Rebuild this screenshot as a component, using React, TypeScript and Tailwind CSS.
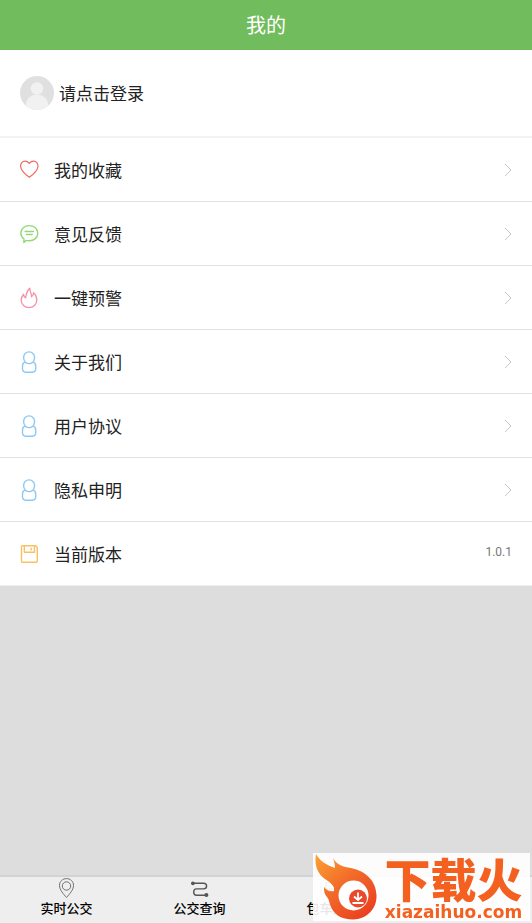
import type { ReactNode } from "react";

const HeartIcon = () => (
  <svg viewBox="0 0 20 22" className="h-[22px] w-5" fill="none" stroke="#ee6a62" strokeWidth="1.2" strokeLinejoin="round">
    <path d="M9.300 18.200C7 16.600 0.900 12 0.600 7.200C0.500 4.200 2.500 2.200 4.900 2.200C6.900 2.200 8.300 3.100 9.300 4.300C10.300 3.100 11.700 2.200 13.700 2.200C16.100 2.200 18.100 4.200 18 7.200C17.700 12 11.600 16.600 9.300 18.200Z" />
  </svg>
);

const ChatIcon = () => (
  <svg viewBox="0 0 20 22" className="h-[22px] w-5" fill="none" stroke="#93d978" strokeWidth="1.4" strokeLinecap="round" strokeLinejoin="round">
    <path d="M4 16C1.900 14.500 0.800 12.600 0.800 10.200C0.800 5.900 4.500 2.600 9.300 2.600C14.100 2.600 17.800 5.900 17.800 10.200C17.800 14.500 14.100 17.800 9.300 17.800C8.200 17.800 7.200 17.700 6.300 17.400L3.800 19.400Z" />
    <path d="M5.200 8.500H13.400M6.400 11.500H12.200" />
  </svg>
);

const FlameIcon = () => (
  <svg viewBox="0 0 20 22" className="h-[22px] w-5" fill="none" stroke="#f78fa9" strokeWidth="1.300" strokeLinejoin="round">
    <path d="M3.600 7.200C3.600 9 4.200 10 5.500 10.800C6.600 7.600 6 4 9.800 1.200C9.600 4.600 11.600 6 11.600 9.800C13.200 8.800 13.600 7.200 13.500 5.600C15.600 7.600 16.800 10 16.800 12.800C16.800 17.400 13.300 20.600 9 20.600C4.700 20.600 1.200 17.600 1.200 13.200C1.200 10.800 2 8.800 3.600 7.200Z" />
  </svg>
);

const PersonIcon = () => (
  <svg viewBox="0 0 20 22" className="h-[22px] w-5" fill="none" stroke="#8ec9f5" strokeWidth="1.400" strokeLinejoin="round">
    <path d="M5.400 11.200C4.200 10 3.600 8.400 3.600 6.600C3.600 3.400 6 0.900 9.100 0.900C12.200 0.900 14.600 3.400 14.600 6.600C14.600 8.400 14 10 12.800 11.200C11.800 12.100 10.600 12.600 9.100 12.600C7.600 12.600 6.400 12.100 5.400 11.200Z" />
    <path d="M5.200 11.200C3.400 11.700 2.500 13 2.500 15V17.800C2.500 20 3.600 21.200 5.800 21.200H12.400C14.600 21.200 15.700 20 15.700 17.800V15C15.700 13 14.800 11.700 13 11.200" />
  </svg>
);

const DiskIcon = () => (
  <svg viewBox="0 0 20 22" className="h-[22px] w-5" fill="none" stroke="#fbc063" strokeWidth="1.400" strokeLinejoin="round">
    <path d="M2.400 2.800H15.600L17.300 4.400V18Q17.300 19.200 16.100 19.200H2.700Q1.500 19.200 1.500 18V3.700Q1.500 2.800 2.400 2.800Z" />
    <path d="M4.300 3V9.200H14.500V3M11.200 4.800V7.600" />
  </svg>
);

const Chevron = () => (
  <svg viewBox="0 0 8 14" className="h-3.5 w-2" fill="none" stroke="#c6c6c6" strokeWidth="1">
    <path d="M1 1L7 7L1 13" />
  </svg>
);

const PinIcon = () => (
  <svg viewBox="0 0 20 20" className="size-5" fill="none" stroke="#707070" strokeWidth="1">
    <path d="M9.500 19.500C6.500 16 2.500 12 2.500 7.400C2.500 3.400 5.600 0.600 9.500 0.600C13.400 0.600 16.500 3.400 16.500 7.400C16.500 12 12.500 16 9.500 19.500Z" />
    <circle cx="9.500" cy="8" r="4.200" />
  </svg>
);

const RouteIcon = () => (
  <svg viewBox="0 0 20 20" className="size-5" fill="none" stroke="#555" strokeWidth="1.400">
    <path d="M4 5.300H13.500Q16.600 5.300 16.600 8.100Q16.600 10.900 13.500 10.900H6.500Q3.700 10.900 3.700 14Q3.700 17.200 6.500 17.200H16" />
    <circle cx="2.900" cy="5.300" r="1.900" fill="#555" stroke="none" />
    <circle cx="16.400" cy="17" r="2" fill="#555" stroke="none" />
  </svg>
);

const BusIcon = () => (
  <svg viewBox="0 0 20 20" className="size-5" fill="none" stroke="#555" strokeWidth="1.200">
    <rect x="3" y="4" width="14" height="12" rx="2" />
    <path d="M3 11H17M6 16V18M14 16V18" />
  </svg>
);

const MeIcon = () => (
  <svg viewBox="0 0 20 20" className="size-5" fill="#555">
    <circle cx="10" cy="7" r="4" />
    <path d="M4 18C4 10 16 10 16 18Z" />
  </svg>
);

type Item = { label: string; icon: ReactNode; value?: string };

const items: Item[] = [
  { label: "我的收藏", icon: <HeartIcon /> },
  { label: "意见反馈", icon: <ChatIcon /> },
  { label: "一键预警", icon: <FlameIcon /> },
  { label: "关于我们", icon: <PersonIcon /> },
  { label: "用户协议", icon: <PersonIcon /> },
  { label: "隐私申明", icon: <PersonIcon /> },
  { label: "当前版本", icon: <DiskIcon />, value: "1.0.1" },
];

const tabs = [
  { id: "live", label: "实时公交", icon: <PinIcon /> },
  { id: "search", label: "公交查询", icon: <RouteIcon /> },
  { id: "charter", label: "包车业务", icon: <BusIcon /> },
  { id: "me", label: "", icon: <MeIcon /> },
];

const Watermark = () => (
  <div className="fixed right-0.5 bottom-0.5 flex h-[68px] w-[217px] bg-white/90 text-[#f4601f]">
    <svg viewBox="0 0 64 68" className="h-[68px] w-16 shrink-0">
      <defs>
        <linearGradient id="flame" x1="0" y1="0" x2="0.800" y2="1">
          <stop offset="0" stopColor="#fba233" />
          <stop offset="0.500" stopColor="#f26a2a" />
          <stop offset="1" stopColor="#ea3f20" />
        </linearGradient>
      </defs>
      <path
        fill="url(#flame)"
        d="M3 1C7 8 13 12 22 15C22 11 21 8 20 5C24 12 30 14 38 15C53 18 63 28 63.500 42C64 56 54 66 40 66.500C30 66.500 23 63 19 56C16 51 17 48 14 44C11 41 11 37 11 34C14 38 18 39 21 38C22 33 18 30 12 26C5 21 1 13 3 1Z"
      />
      <circle cx="40.500" cy="42.500" r="15" fill="#fff" />
      <circle cx="45" cy="45.500" r="9" fill="#e9482a" />
      <path d="M45 39.500V46M41 43.500L45 47L49 43.500M39.500 50H50.500" fill="none" stroke="#fff" strokeWidth="1.800" />
    </svg>
    <div className="flex flex-1 flex-col items-center justify-between pt-1 pb-px">
      <span className="text-[46px] leading-10 font-black whitespace-nowrap">下载火</span>
      <span className="font-['DejaVu_Sans',sans-serif] text-[17px] leading-4 font-bold">xiazaihuo.com</span>
    </div>
  </div>
);

export default function App() {
  return (
    <div className="flex min-h-screen flex-col bg-[#ddd] font-['Noto_Sans_CJK_SC',sans-serif] text-[#222]">
      <header className="flex h-[50px] items-center justify-center bg-[#71bc5c]">
        <h1 className="text-xl text-white">我的</h1>
      </header>

      <main className="flex-1">
        <button type="button" className="flex h-[88px] w-full items-center gap-[5px] border-b-2 border-[#f2f2f2] bg-white pl-5 text-left">
          <svg viewBox="0 0 34 34" className="size-[34px]">
            <clipPath id="avatar">
              <circle cx="17" cy="17" r="17" />
            </clipPath>
            <g clipPath="url(#avatar)">
              <rect width="34" height="34" fill="#e0e0e0" />
              <circle cx="17" cy="12.500" r="6.200" fill="#f1f1f1" />
              <path d="M6 34V29C6 15 28 15 28 29V34Z" fill="#f1f1f1" />
            </g>
          </svg>
          <span className="text-[17px]">请点击登录</span>
        </button>

        <ul>
          {items.map((item) => (
            <li key={item.label} className="border-b border-[#e0e0e0] bg-white last:border-[#eee]">
              <button type="button" className="flex h-[63px] w-full items-center px-5 text-left">
                {item.icon}
                <span className="ml-3.5 flex-1 text-[17px]">{item.label}</span>
                {item.value ? (
                  <span className="pb-1 font-[Roboto,sans-serif] text-xs text-[#777]">{item.value}</span>
                ) : (
                  <Chevron />
                )}
              </button>
            </li>
          ))}
        </ul>
      </main>

      <nav className="grid h-12 grid-cols-4 border-t-2 border-[#d3d3d3] bg-[#eee] text-black">
        {tabs.map((tab) => (
          <button key={tab.id} type="button" className="flex flex-col items-center pt-px">
            {tab.icon}
            <span className="text-[13px] leading-5 font-medium">{tab.label}</span>
          </button>
        ))}
      </nav>

      <Watermark />
    </div>
  );
}
